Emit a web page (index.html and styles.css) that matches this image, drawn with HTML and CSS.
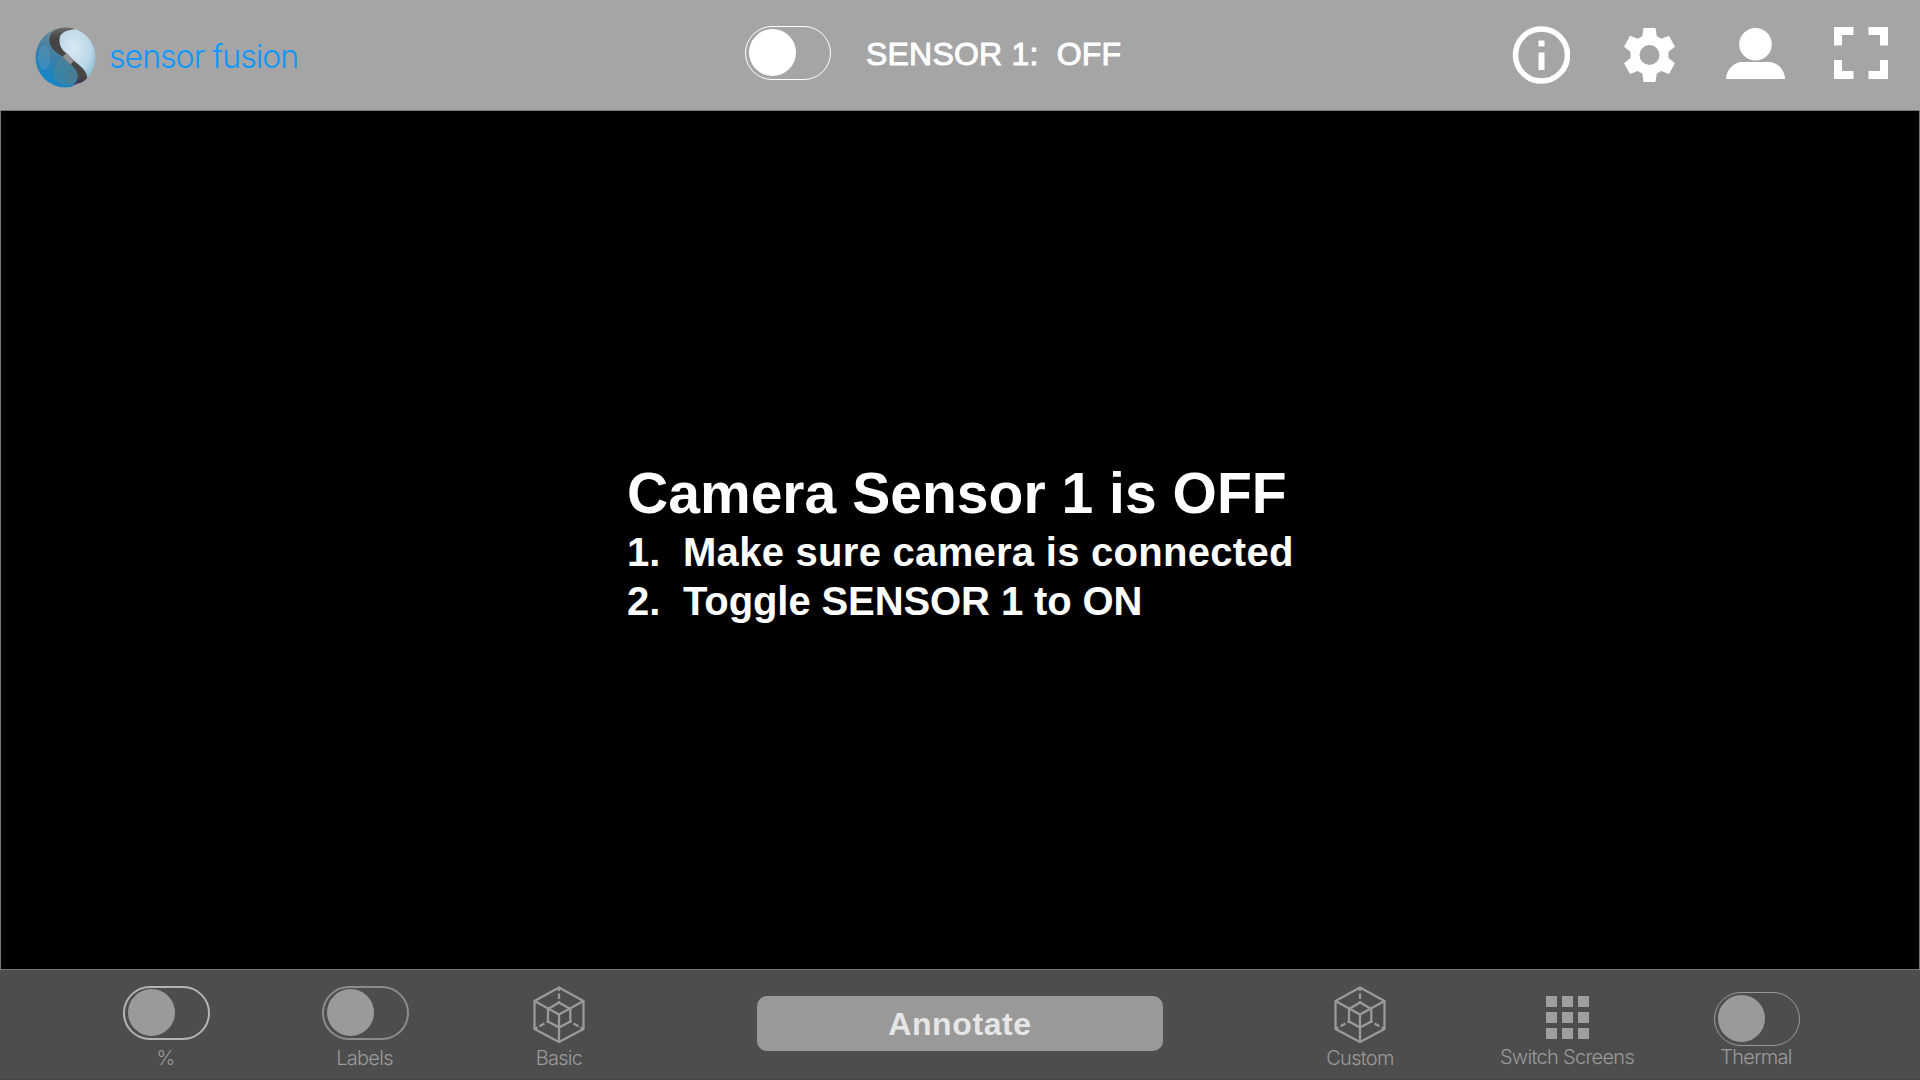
FILE: index.html
```html
<!DOCTYPE html>
<html lang="en">
<head>
<meta charset="utf-8">
<title>Sensor Fusion</title>
<link rel="stylesheet" href="styles.css">
</head>
<body>
<svg class="defs" width="0" height="0">
  <symbol id="cube" viewBox="0 0 52 58">
    <g fill="none" stroke="currentColor" stroke-width="2.300" stroke-linejoin="round">
      <path d="M26 1.500 50.500 15V43L26 56 1.500 43V15Z"/>
      <path d="M1.500 15 26 28.500 50.500 15M26 28.500V56"/>
      <path d="M26 16.500 37.300 23V35.500L26 41.500 15 35.500V23Z"/>
      <path d="M26 2V5M26 7.500V13M26 15V17M2 42.700 4.500 41.300M6.500 40.200 11.500 37.400M13.500 36.300 15 35.500M50 42.700 47.500 41.300M45.500 40.200 40.500 37.400M38.500 36.300 37.300 35.500"/>
    </g>
  </symbol>
</svg>
<div class="app">
  <header class="topbar">
    <div class="brand">
      <svg class="logo" viewBox="0 0 60 60">
        <defs>
          <linearGradient id="deep" x1=".75" y1="0" x2=".3" y2="1">
            <stop offset="0" stop-color="#7c929c"/><stop offset=".5" stop-color="#417fa5"/><stop offset="1" stop-color="#0787d2"/>
          </linearGradient>
          <radialGradient id="sky" cx=".4" cy=".4" r=".75">
            <stop offset="0" stop-color="#dbe8f2"/><stop offset=".6" stop-color="#b9d8e9"/><stop offset="1" stop-color="#7fb2cc"/>
          </radialGradient>
          <linearGradient id="band" x1="0" y1="0" x2="0" y2="1">
            <stop offset="0" stop-color="#6b6b6b"/><stop offset=".2" stop-color="#444"/><stop offset=".85" stop-color="#484848"/><stop offset="1" stop-color="#3a2d52"/>
          </linearGradient>
          <clipPath id="ball"><circle cx="30" cy="30" r="29.500"/></clipPath>
        </defs>
        <g clip-path="url(#ball)">
          <path fill="url(#deep)" d="M0 0H28C18 2 14 6 14 13C14 20 20 24 27 29L35 37C42 42 43 48 41 54C39 57 36 60 32 60H0Z"/>
          <path fill="url(#sky)" d="M40 2C30 3 23 6 24 14C24 20 27 23 31 26L38 33C45 39 51 43 51.700 50L60 52V0Z"/>
          <path fill="url(#band)" d="M28 0C18 2 14 6 14 13C14 20 20 25 27 29L35 37C42 43 43 48 41 53L38 57C43 57 48 55 51 53C53 44 45 39 38 33L31 26C27 23 24 19 24 13C24 6 30 3 40 2V0Z"/>
          <path fill="#929292" d="M31 25.700 38.500 33 35 37 27 29.300Z"/>
          <ellipse cx="9" cy="30" rx="6" ry="12" fill="#6fa5c6" opacity=".3"/>
          <path fill="#4f858f" opacity=".45" d="M26 30C18 36 16 46 20 53C27 59 36 58 40 54C43 47 41 41 35 37Z"/>
          <ellipse cx="35" cy="49" rx="6" ry="7" fill="#57717c" opacity=".3"/>
        </g>
        <path fill="#a5a5a5" d="M33 60.500C37 59 39 57.500 40.500 56C46 55.500 50 53 53 50L60 60Z"/>
      </svg>
      <span class="brand-name">sensor fusion</span>
    </div>
    <div class="sensor">
      <span class="toggle toggle-sensor"><span class="knob"></span></span>
      <span class="sensor-label">SENSOR 1:&nbsp; OFF</span>
    </div>
    <nav class="actions">
      <svg class="info" viewBox="0 0 58 58" fill="#fff"><circle cx="29.500" cy="29" r="26" fill="none" stroke="#fff" stroke-width="5.600"/><path d="M26.500 14.500h6v6h-6zM26.500 26.500h6v17.500h-6z"/></svg>
      <svg class="gear" viewBox="0 0 51 54"><path fill="#fff" fill-rule="evenodd" d="M19.500 0H31.500L32.800 8.200 37.300 10.700 45 7.800 51 18.700 44.500 23.800V30L51 35.200 45 46 37.300 43 32.800 45.500 31.500 54H19.500L18.300 45.500 13.700 43 6 46 0 35.200 6.500 30V23.800L0 18.700 6 7.800 13.700 10.700 18.300 8.200ZM25.500 17A10 10 0 1 0 25.500 37 10 10 0 1 0 25.500 17Z"/></svg>
      <svg class="user" viewBox="0 0 59 51" fill="#fff"><circle cx="29.500" cy="16.300" r="16.300"/><path d="M0 51C.5 42 6 36 14 34H45C53 36 58.500 42 59 51Z"/></svg>
      <svg class="full" viewBox="0 0 54 52" fill="none" stroke="#fff" stroke-width="8"><path d="M4 18.500V4H19.500M34.500 4H50V18.500M4 33V48H19.500M34.500 48H50V33"/></svg>
    </nav>
  </header>
  <main class="view">
    <section class="message">
      <h1>Camera Sensor 1 is OFF</h1>
      <div class="step"><span class="num">1.</span><span class="step-a">Make sure camera is connected</span></div>
      <div class="step"><span class="num">2.</span><span class="step-b">Toggle SENSOR 1 to ON</span></div>
    </section>
  </main>
  <footer class="toolbar">
    <div class="tool percent"><span class="toggle toggle-percent"><span class="knob"></span></span><span class="caption">%</span></div>
    <div class="tool labels"><span class="toggle toggle-labels"><span class="knob"></span></span><span class="caption">Labels</span></div>
    <div class="tool basic"><svg class="cube"><use href="#cube"/></svg><span class="caption">Basic</span></div>
    <button class="annotate">Annotate</button>
    <div class="tool custom"><svg class="cube"><use href="#cube"/></svg><span class="caption">Custom</span></div>
    <div class="tool switch"><span class="grid"><i></i><i></i><i></i><i></i><i></i><i></i><i></i><i></i><i></i></span><span class="caption">Switch Screens</span></div>
    <div class="tool thermal"><span class="toggle toggle-thermal"><span class="knob"></span></span><span class="caption">Thermal</span></div>
  </footer>
</div>
</body>
</html>
```
FILE: styles.css
```css
* { box-sizing: border-box; }
body { margin: 0; background: #000; font-family: "Liberation Sans", sans-serif; }
.defs { display: block; }
svg { display: block; flex: none; }
.app { width: 1920px; height: 1080px; display: grid; grid-template-rows: 110px 860px 110px; overflow: hidden; }

.topbar { background: #a5a5a5; display: grid; grid-template-columns: 745px 767px 1fr; align-items: start; }
.brand { display: flex; padding: 27px 0 0 35px; gap: 14px; }
.logo { width: 61px; height: 61px; }
.brand-name { font: 300 32px/38px Inter, sans-serif; color: #0b97ff; margin: 11px 0 0 -1px; letter-spacing: -0.95px; white-space: nowrap; }
.sensor { display: flex; padding-top: 26px; gap: 35px; }
.sensor-label { font-size: 32px; line-height: 36px; margin-top: 10px; color: #fff; letter-spacing: 0.2px; -webkit-text-stroke: 1px #fff; white-space: pre; }
.actions { display: flex; }
.info { width: 58px; height: 58px; margin-top: 26px; }
.gear { width: 51px; height: 54px; margin: 28px 0 0 54px; }
.user { width: 59px; height: 51px; margin: 28px 0 0 51px; }
.full { width: 54px; height: 52px; margin: 27px 0 0 49px; }

.toggle { display: block; flex: none; width: 86px; height: 54px; border: 1px solid; border-radius: 27px; padding: 2px 0 0 3px; }
.knob { display: block; width: 47px; height: 47px; border-radius: 50%; background: #9a9a9a; }
.toggle-sensor { border-color: #fff; }
.toggle-sensor .knob { background: #fff; }

.view { border: 1px solid #777; background: #000; color: #fff; padding: 350px 0 0 626px; }
.message { font-weight: 700; white-space: nowrap; }
h1 { margin: 0 0 3px; font-size: 57px; line-height: 64px; letter-spacing: 0.03px; }
.step { display: flex; font-size: 40px; line-height: 49px; }
.num { width: 56px; }
.step-a { letter-spacing: 0.28px; }
.step-b { letter-spacing: -0.1px; }

.toolbar { background: #4d4d4d; border-bottom: 1px solid #454545; display: grid; grid-template-columns: 89.5px 152px 246px 143px 126.5px 406px 99px 196px 218px 160px 1fr; align-items: start; }
.tool { display: flex; flex-direction: column; align-items: center; }
.caption { font: 300 20px/24px Inter, sans-serif; letter-spacing: -0.7px; color: #9a9a9a; white-space: nowrap; }
.percent { grid-column: 2; padding-top: 16px; gap: 6px; }
.labels { grid-column: 3; padding-top: 16px; gap: 6px; }
.basic { grid-column: 4; padding-top: 16px; gap: 2px; }
.annotate { grid-column: 6; height: 55px; margin: 26px 0 0; border: 0; border-radius: 10px; background: #999; color: #e6e6e6; font: 700 32px/55px "Liberation Sans", sans-serif; letter-spacing: 0.6px; padding: 1px 0 0; }
.custom { grid-column: 8; padding-top: 16px; gap: 2px; }
.switch { grid-column: 9; padding-top: 26px; gap: 6px; }
.thermal { grid-column: 10; padding-top: 22px; }
.thermal .toggle { margin-left: 2px; }
.thermal .caption { margin-top: -1px; }
.cube { width: 52px; height: 58px; color: #9a9a9a; }
.toggle-percent { border: 2px solid #b4b4b4; padding: 1px 0 0 3px; width: 87px; margin-left: 1px; }
.toggle-labels { border: 2px solid #8c8c8c; padding: 1px 0 0 3px; width: 87px; margin-left: 1px; }
.toggle-thermal { border-color: #9a9a9a; }
.grid { display: grid; grid-template-columns: repeat(3, 11px); grid-auto-rows: 11px; gap: 5px; }
.grid i { background: #9f9f9f; }
```
